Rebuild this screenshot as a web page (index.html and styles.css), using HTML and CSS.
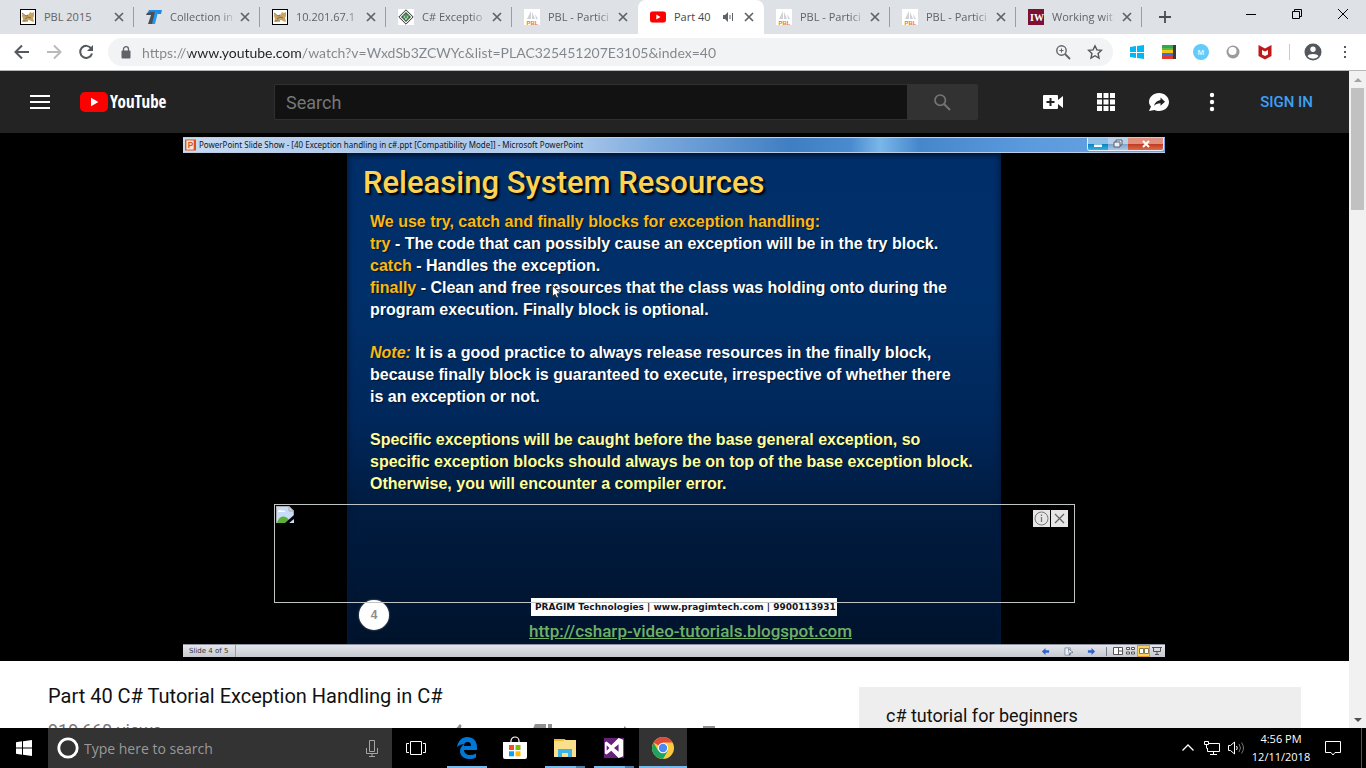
FILE: index.html
```html
<!DOCTYPE html>
<html lang="en">
<head>
<meta charset="utf-8">
<title>Part 40 C# Tutorial Exception Handling in C# - YouTube</title>
<link rel="stylesheet" href="styles.css">
</head>
<body>
<svg class="defs" aria-hidden="true">
  <defs>
    <symbol id="close" viewBox="0 0 10 10"><path d="M1 1l8 8M9 1l-8 8" stroke="#5f6368" stroke-width="1.7" fill="none"/></symbol>
    <symbol id="tomcat" viewBox="0 0 16 16"><rect x=".5" y=".5" width="15" height="15" fill="#fff" stroke="#000"/><path d="M2 5l4 2 3-2 1-2 2 1 2-1v4l-1 2 1 3-1 1-4-2-3 1-4 1 1-3-1-3z" fill="#c9a562"/><path d="M2 4l4 3 2-1M5 10l3-2 3 1M3 12h5" stroke="#7c6c4c" fill="none"/></symbol>
    <symbol id="pbl" viewBox="0 0 16 16"><path d="M0 0h16v16H0z" fill="#fff"/><path d="M3 10l4-8v8zM8 10V3l3 7zM11 5l3 5h-2z" fill="#cfd1d4"/><text x="2.500" y="15.500" class="pbl-mark">PBL</text></symbol>
    <symbol id="yt" viewBox="0 0 28 20"><rect width="28" height="20" rx="5" fill="#f00"/><path d="M11 5.700v8.600l7.400-4.300z" fill="#fff"/></symbol>
  </defs>
</svg>

<header class="tabstrip">
  <nav class="tabs" aria-label="Tabs">
    <div class="tab"><svg class="fav"><use href="#tomcat"/></svg><a href="#" class="tab-name">PBL 2015</a><button class="x" aria-label="Close tab"><svg><use href="#close"/></svg></button></div>
    <div class="tab"><svg class="fav" viewBox="0 0 16 16"><path d="M3 1h13l-1 4H1z" fill="#1e88e5"/><path d="M5 3h5L7 15H2l3-9H0l1-2z" fill="#4a4f55"/><path d="M9 3h3L9 15H6z" fill="#1e9bf0"/></svg><a href="#" class="tab-name fade">Collection in</a><button class="x" aria-label="Close tab"><svg><use href="#close"/></svg></button></div>
    <div class="tab"><svg class="fav"><use href="#tomcat"/></svg><a href="#" class="tab-name fade">10.201.67.1</a><button class="x" aria-label="Close tab"><svg><use href="#close"/></svg></button></div>
    <div class="tab"><svg class="fav" viewBox="0 0 16 16"><path d="M0 0h16v16H0z" fill="#fff"/><path d="M8 .8L15.200 8 8 15.200.8 8z" fill="#e8eee8" stroke="#333"/><path d="M8 3l5 5-5 5-5-5z" fill="#555"/><path d="M5 6l3-1 3 1v3l-3 2-3-2z" fill="#4d9a5c"/><path d="M6 8h1M9 8h1M7 10h2" stroke="#fff"/></svg><a href="#" class="tab-name fade">C# Exceptio</a><button class="x" aria-label="Close tab"><svg><use href="#close"/></svg></button></div>
    <div class="tab before-active"><svg class="fav"><use href="#pbl"/></svg><a href="#" class="tab-name fade">PBL - Partici</a><button class="x" aria-label="Close tab"><svg><use href="#close"/></svg></button></div>
    <div class="tab active"><svg class="fav fav-yt" viewBox="0 0 28 20"><use href="#yt"/></svg><a href="#" class="tab-name">Part 40</a><button class="mute" aria-label="Mute tab"><svg viewBox="0 0 12 10"><path d="M0 3h2l3-3v10L2 7H0z" fill="#5f6368"/><path d="M7 3v4M9.500 1v8" stroke="#5f6368"/></svg></button><button class="x" aria-label="Close tab"><svg><use href="#close"/></svg></button></div>
    <div class="tab"><svg class="fav"><use href="#pbl"/></svg><a href="#" class="tab-name fade">PBL - Partici</a><button class="x" aria-label="Close tab"><svg><use href="#close"/></svg></button></div>
    <div class="tab"><svg class="fav"><use href="#pbl"/></svg><a href="#" class="tab-name fade">PBL - Partici</a><button class="x" aria-label="Close tab"><svg><use href="#close"/></svg></button></div>
    <div class="tab"><svg class="fav" viewBox="0 0 16 16"><path d="M0 0h16v16H0z" fill="#7d1230"/><text x="2" y="12" class="iw-mark">IW</text></svg><a href="#" class="tab-name fade">Working wit</a><button class="x" aria-label="Close tab"><svg><use href="#close"/></svg></button></div>
  </nav>
  <button class="newtab" aria-label="New tab"><svg viewBox="0 0 12 12"><path d="M6 0v12M0 6h12" stroke="#4a4d51" stroke-width="1.800"/></svg></button>
  <div class="winbtns">
    <button aria-label="Minimize"><svg viewBox="0 0 10 10"><path d="M0 5.500h10" stroke="#000"/></svg></button>
    <button aria-label="Restore"><svg viewBox="0 0 10 10"><path d="M.5 2.500h7v7h-7zM2.500 2.500v-2h7v7h-2" fill="none" stroke="#000"/></svg></button>
    <button aria-label="Close"><svg viewBox="0 0 10 10"><path d="M0 0l10 10M10 0L0 10" stroke="#000"/></svg></button>
  </div>
</header>

<div class="toolbar">
  <button class="tool" aria-label="Back"><svg viewBox="0 0 16 16"><path d="M15 8H2M8 1.500L1.500 8 8 14.500" fill="none" stroke="#54575b" stroke-width="2"/></svg></button>
  <button class="tool" aria-label="Forward"><svg viewBox="0 0 16 16"><path d="M1 8h13M8 1.500L14.500 8 8 14.500" fill="none" stroke="#bababa" stroke-width="2"/></svg></button>
  <button class="tool" aria-label="Reload"><svg viewBox="0 0 16 16"><path d="M13.200 4.500A6 6 0 1 0 14 9.500" fill="none" stroke="#54575b" stroke-width="2"/><path d="M15 1v6H9z" fill="#54575b"/></svg></button>
  <div class="omnibox">
    <svg class="lock" viewBox="0 0 10 13"><path d="M2.500 5V3.200a2.500 2.500 0 0 1 5 0V5" fill="none" stroke="#5f6368" stroke-width="1.300"/><rect x=".5" y="4.500" width="9" height="8" rx="1" fill="#5f6368"/></svg>
    <input class="url" aria-label="Address" value="https://www.youtube.com/watch?v=WxdSb3ZCWYc&amp;list=PLAC325451207E3105&amp;index=40">
    <button class="tool" aria-label="Zoom"><svg viewBox="0 0 16 16"><circle cx="6.500" cy="6.500" r="4.700" fill="none" stroke="#5f6368" stroke-width="1.400"/><path d="M10 10l5 5" stroke="#5f6368" stroke-width="1.800"/><path d="M6.500 4.500v4M4.500 6.500h4" stroke="#5f6368"/></svg></button>
    <button class="tool" aria-label="Bookmark"><svg viewBox="0 0 16 16"><path d="M8 1.800l1.900 4.100 4.500.5-3.300 3.100.9 4.500-4-2.300L4 14l.9-4.500L1.600 6.400l4.500-.5z" fill="none" stroke="#54575b" stroke-width="1.400"/></svg></button>
  </div>
  <button class="tool" aria-label="Windows"><svg viewBox="0 0 16 16"><path d="M1 3l6-1v6H1zM8 2l7-1v7H8zM1 9h6v5l-6-1zM8 9h7v6l-7-1z" fill="#00b9f2"/></svg></button>
  <button class="tool" aria-label="Stack"><svg viewBox="0 0 16 16"><path d="M1 1h12v3H1z" fill="#2fa84f"/><path d="M1 4h12v3H1z" fill="#58b947"/><path d="M1 6h12v3H1z" fill="#f8c21c"/><path d="M1 9h12v2H1z" fill="#3b6fd8"/><path d="M1 11h12v4H1z" fill="#e0392b"/><path d="M12 1h3v14h-3z" fill="#3b3b3b"/></svg></button>
  <button class="tool" aria-label="Momentum"><svg viewBox="0 0 16 16"><circle cx="8" cy="8" r="8" fill="#63cbfa"/><text x="4.500" y="11" class="m-mark">M</text></svg></button>
  <button class="tool" aria-label="Extension"><svg viewBox="0 0 16 16"><circle cx="8" cy="8" r="6.500" fill="#9b9b9b"/><circle cx="7.500" cy="7" r="4" fill="#fff"/></svg></button>
  <button class="tool" aria-label="McAfee"><svg viewBox="0 0 16 16"><path d="M1.500 1L8 4.500 14.500 1v11L8 15.500 1.500 12zM5 6v4.500L8 12l3-1.500V6L8 7.500z" fill="#c01818" fill-rule="evenodd"/></svg></button>
  <span class="rule"></span>
  <button class="tool avatar" aria-label="Profile"><svg viewBox="0 0 18 18"><circle cx="9" cy="9" r="8.500" fill="#54575b"/><circle cx="9" cy="6.300" r="2.700" fill="#fff"/><path d="M3.500 13.200c1-3 10-3 11 0a7 7 0 0 1-11 0z" fill="#fff"/></svg></button>
  <button class="tool" aria-label="Menu"><svg viewBox="0 0 16 16"><path d="M7 2h2v2H7zM7 7h2v2H7zM7 12h2v2H7z" fill="#54575b"/></svg></button>
</div>

<div class="viewport">
  <div class="page">
    <header class="masthead">
      <div class="brand">
        <button class="guide" aria-label="Guide"><svg viewBox="0 0 20 14"><path d="M0 1h20M0 7h20M0 13h20" stroke="#fff" stroke-width="2"/></svg></button>
        <a href="#" class="logo"><svg viewBox="0 0 28 20"><use href="#yt"/></svg><span>YouTube</span></a>
      </div>
      <form class="search">
        <input type="text" placeholder="Search" aria-label="Search">
        <button type="button" aria-label="Search"><svg viewBox="0 0 17 17"><circle cx="6.200" cy="6.200" r="5.200" fill="none" stroke="#757575" stroke-width="1.700"/><path d="M10 10l6 6" stroke="#757575" stroke-width="2"/></svg></button>
      </form>
      <div class="actions">
        <button aria-label="Create"><svg viewBox="0 0 22 20"><path d="M2 3h13a1 1 0 0 1 1 1v4l5-4v12l-5-4v4a1 1 0 0 1-1 1H2a1 1 0 0 1-1-1V4a1 1 0 0 1 1-1z" fill="#fff"/><path d="M8.500 6v8M4.500 10h8" stroke="#222" stroke-width="2"/></svg></button>
        <button aria-label="Apps"><svg viewBox="0 0 22 20"><path d="M2 1h5v5H2zM8.500 1h5v5h-5zM15 1h5v5h-5zM2 7.500h5v5H2zM8.500 7.500h5v5h-5zM15 7.500h5v5h-5zM2 14h5v5H2zM8.500 14h5v5h-5zM15 14h5v5h-5z" fill="#fff"/></svg></button>
        <button aria-label="Messages"><svg viewBox="0 0 22 20"><path d="M11 1c5.600 0 10 4 10 9s-4.400 9-10 9c-1.700 0-3-.3-4.500-1L1 19l2-4.500C1.700 13 1 11.500 1 10c0-5 4.400-9 10-9z" fill="#fff"/><path d="M12.500 5.500L17 9.700l-4.500 4v-2.500c-3 0-5 .8-6.500 2.800.5-3.500 3-5.500 6.500-6z" fill="#222"/></svg></button>
        <button aria-label="Settings"><svg viewBox="0 0 22 20"><circle cx="11" cy="3" r="2.200" fill="#fff"/><circle cx="11" cy="10" r="2.200" fill="#fff"/><circle cx="11" cy="17" r="2.200" fill="#fff"/></svg></button>
        <a href="#" class="signin">SIGN IN</a>
      </div>
    </header>

    <section class="player">
      <div class="ppt">
        <div class="ppt-title">
          <svg class="ppt-icon" viewBox="0 0 12 12"><path d="M0 0h12v12H0z" fill="#d9531e"/><path d="M1.500 1h8v10h-8z" fill="#fbe3d4"/><text x="3" y="9.500" class="p-mark">P</text></svg>
          <span>PowerPoint Slide Show - [40 Exception handling in c#.ppt [Compatibility Mode]] - Microsoft PowerPoint</span>
          <div class="ppt-btns">
            <button class="min" aria-label="Minimize slide show"><svg viewBox="0 0 12 10"><path d="M2 5.500h8v2.500H2z" fill="#fff"/></svg></button>
            <button class="res" aria-label="Restore slide show"><svg viewBox="0 0 12 10"><path d="M2 3h6v5H2zM4 3V1h6v5H8" fill="#e8eef6" stroke="#56606e"/></svg></button>
            <button class="cls" aria-label="Close slide show"><svg viewBox="0 0 12 10"><path d="M3 2l6 6M9 2L3 8" stroke="#fff" stroke-width="2"/></svg></button>
          </div>
        </div>
        <article class="slide">
          <h1>Releasing System Resources</h1>
          <p><b>We use try, catch and finally blocks for exception handling:</b><br><b>try</b> - The code that can possibly cause an exception will be in the try block.<br><b>catch</b> - Handles the exception.<br><b>finally</b> - Clean and free resources that the class was holding onto during the<br>program execution. Finally block is optional.</p>
          <p><b><i>Note:</i></b> It is a good practice to always release resources in the finally block,<br>because finally block is guaranteed to execute, irrespective of whether there<br>is an exception or not.</p>
          <p class="pale">Specific exceptions will be caught before the base general exception, so<br>specific exception blocks should always be on top of the base exception block.<br>Otherwise, you will encounter a compiler error.</p>
          <footer class="slide-foot">
            <span class="num">4</span>
            <div class="credits">
              <span class="firm">PRAGIM Technologies | www.pragimtech.com | 9900113931</span>
              <a href="#">http://csharp-video-tutorials.blogspot.com</a>
            </div>
          </footer>
          <svg class="pointer" viewBox="0 0 9 14"><path d="M.5.5v11l2.500-2.300L4.800 13l1.700-.8L5 8.700h3.300z" fill="#fff" stroke="#222" stroke-width=".8"/></svg>
        </article>
        <div class="ppt-status">
          <span class="slide-no">Slide 4 of 5</span>
          <div class="ppt-nav">
            <button aria-label="Previous slide"><svg viewBox="0 0 10 10"><path d="M1 5l4-4v2.500h4v3H5V9z" fill="#2f62d0"/></svg></button>
            <button aria-label="Slide menu"><svg viewBox="0 0 10 10"><path d="M1 1h6v8H1z" fill="#e9eef7" stroke="#8793a8"/><path d="M5 2l5 4-3 .5L6 9z" fill="#fff" stroke="#4c5a70" stroke-width=".7"/></svg></button>
            <button aria-label="Next slide"><svg viewBox="0 0 10 10"><path d="M9 5L5 1v2.500H1v3h4V9z" fill="#2f62d0"/></svg></button>
          </div>
          <div class="ppt-views">
            <button aria-label="Normal"><svg viewBox="0 0 10 8"><path d="M.5.5h9v7h-9zM5.500 1v6M5.500 4h4" fill="#fff" stroke="#555"/></svg></button>
            <button aria-label="Sorter"><svg viewBox="0 0 10 8"><path d="M.5.5h3v2h-3zM5.500.5h3v2h-3zM.5 5h3v2h-3zM5.500 5h3v2h-3z" fill="#fff" stroke="#555"/></svg></button>
            <button class="on" aria-label="Reading"><svg viewBox="0 0 10 8"><path d="M.5 1.500h4v5h-4zM5.500 1.500h4v5h-4z" fill="#fff" stroke="#8b7a4a"/></svg></button>
            <button aria-label="Show"><svg viewBox="0 0 10 8"><path d="M0 .5h10M1.500 1v3.500h7V1M5 5v2M3 7.500h4" fill="none" stroke="#555"/></svg></button>
          </div>
        </div>
      </div>
      <aside class="ad">
        <svg class="broken" viewBox="0 0 18 17"><path d="M0 0h13l5 5v12H0z" fill="#c8dcf8"/><path d="M2 6c0-2 3-3 4-1 2-1 3 0 3 1z" fill="#fff"/><path d="M1 17c2-8 9-8 12-3l1 3z" fill="#5bb13a"/><path d="M9 17l9-8v4l-5 4z" fill="#000"/><path d="M.5 17V.5H13l4.500 4.500v4M13 .5V5h4.500" fill="none" stroke="#a9a9a9"/></svg>
        <div class="ad-btns">
          <button aria-label="Ad info"><svg viewBox="0 0 17 17"><circle cx="8.500" cy="8.500" r="6.500" fill="none" stroke="#777"/><path d="M8.500 7v5M8.500 4.500V6" stroke="#777" stroke-width="1.300"/></svg></button>
          <button aria-label="Close ad"><svg viewBox="0 0 17 17"><path d="M4 4l9 9M13 4l-9 9" stroke="#666" stroke-width="1.300"/></svg></button>
        </div>
      </aside>
    </section>

    <main class="below">
      <section class="primary">
        <h2>Part 40 C# Tutorial Exception Handling in C#</h2>
        <div class="meta">
          <span>919,660 views</span>
          <div class="meta-btns">
            <button aria-label="Like"><svg viewBox="0 0 22 22"><path d="M0 9h4v12H0zM6 9l7-8 1.500 1.500L13.500 8H21v5l-3 8H6z" fill="#909090"/></svg></button>
            <button aria-label="Dislike"><svg viewBox="0 0 22 22"><path d="M4 1h11v12l-6 7-2-1 1-6H1V8zM17 1h4v12h-4z" fill="#909090"/></svg></button>
            <button aria-label="Share"><svg viewBox="0 0 22 22"><path d="M9 3l10 8-10 8v-4c-4 0-7 2-8 5 0-6 3-10 8-11z" fill="#909090"/></svg></button>
            <button aria-label="Save"><svg viewBox="0 0 22 22"><path d="M4 3h12v2H4zM4 7h12v2H4zM4 12h8v2H4z" fill="#909090"/></svg></button>
          </div>
        </div>
      </section>
      <aside class="playlist"><h3>c# tutorial for beginners</h3></aside>
    </main>
  </div>
  <div class="scrollbar">
    <button aria-label="Scroll up"><svg viewBox="0 0 8 4"><path d="M4 0l4 4H0z" fill="#a3a3a3"/></svg></button>
    <span class="thumb"></span>
    <button class="down" aria-label="Scroll down"><svg viewBox="0 0 8 4"><path d="M4 4L0 0h8z" fill="#505050"/></svg></button>
  </div>
</div>

<footer class="taskbar">
  <button class="task start" aria-label="Start"><svg viewBox="0 0 16 16"><path d="M0 2.200l6-.9v6.200H0zM7 1.200l9-1.200v7.500H7zM0 8.500h6v6.200l-6-.9zM7 8.500h9V16l-9-1.200z" fill="#fff"/></svg></button>
  <div class="cortana">
    <svg class="ring" viewBox="0 0 22 22"><circle cx="11" cy="11" r="9.200" fill="none" stroke="#fff" stroke-width="2.800"/></svg>
    <input type="text" placeholder="Type here to search" aria-label="Type here to search">
    <button aria-label="Speak"><svg viewBox="0 0 12 17"><path d="M3.500.5h5v11h-5zM.5 8v5.500h11V8M6 13.500v3M3 16.500h6" fill="none" stroke="#a5a5a5"/></svg></button>
  </div>
  <div class="tasks">
    <button class="task view" aria-label="Task view"><svg viewBox="0 0 20 14"><path d="M4.500.5h11v13h-11zM3 2.500H.5v9H3M17 2.500h2.500v9H17" fill="none" stroke="#fff"/></svg></button>
    <button class="task run" aria-label="Edge"><svg viewBox="0 0 22 22"><path d="M1 10C2 4 6 0 11 0c6 0 10 4 10 10v3H8c0 3 3 5 6 5 2 0 4-.5 6-1.500v4C18 21.500 16 22 13 22 7 22 4 18 4 14c0-3 2-6 5-7-3 0-6 1-8 3zm7-1h7c0-3-1-4-3.500-4S8 6.500 8 9z" fill="#0078d7"/></svg></button>
    <button class="task store" aria-label="Store"><svg viewBox="0 0 24 24"><path d="M8 7V5a4 4 0 0 1 8 0v2" fill="none" stroke="#fff" stroke-width="1.200"/><path d="M0 6h24v15q0 2-2 2H2q-2 0-2-2z" fill="#fff"/><path d="M6 9h5v5H6z" fill="#f25022"/><path d="M12.500 9h5v5h-5z" fill="#7fba00"/><path d="M6 15.300h5v5H6z" fill="#00a4ef"/><path d="M12.500 15.300h5v5h-5z" fill="#ffb900"/></svg></button>
    <button class="task run many" aria-label="File Explorer"><svg viewBox="0 0 22 20"><path d="M0 1h10l2 1h10v17H0z" fill="#fbe08c"/><path d="M0 1h10v2H0z" fill="#f2bd2c"/><path d="M4 19v-8h14v8h-4v-4H8v4z" fill="#3db4e8"/></svg></button>
    <button class="task run many" aria-label="Visual Studio"><svg viewBox="0 0 24 24"><path d="M1 1h22v22H1z" fill="#68217a"/><path d="M17 1l5 2v18l-5 2-8-8-5 4-2-1V6l2-1 5 4zM4 9v6l3-3zM17 8l-5 4 5 4z" fill="#fff" fill-rule="evenodd"/></svg></button>
    <button class="task run current" aria-label="Chrome"><svg viewBox="0 0 22 22"><circle cx="11" cy="11" r="11" fill="#fcc93c"/><path d="M11 11L1.500 5.500A11 11 0 0 1 20.500 5.500H11z" fill="#dd4b3e"/><path d="M1.500 5.500A11 11 0 0 0 11 22l5-8.500-5-2.500-4.800 2.700z" fill="#1da362"/><circle cx="11" cy="11" r="5.200" fill="#fff"/><circle cx="11" cy="11" r="4.200" fill="#4a8af4"/></svg></button>
  </div>
  <div class="tray">
    <button aria-label="Hidden icons"><svg viewBox="0 0 16 16"><path d="M2.500 10.500L8 5l5.500 5.500" fill="none" stroke="#fff" stroke-width="1.300"/></svg></button>
    <button aria-label="Network"><svg viewBox="0 0 16 16"><path d="M4 3.500h11.500v8H3.500V8M9.500 12v2.500M6 14.500h7M.5 1.500h4v3h-4zM2.500 5v3.500" fill="none" stroke="#fff"/></svg></button>
    <button aria-label="Volume"><svg viewBox="0 0 16 16"><path d="M.5 5.500h2l4-3.500v12l-4-3.500h-2z" fill="none" stroke="#fff"/><path d="M8.500 6q1.500 2 0 4" fill="none" stroke="#fff"/><path d="M11 4q3 4 0 8M13.500 2.500q4 5.500 0 11" fill="none" stroke="#777"/></svg></button>
    <div class="clock"><time>4:56 PM</time><time>12/11/2018</time></div>
    <button aria-label="Notifications"><svg viewBox="0 0 16 16"><path d="M.5 1.500h15v11H10l-2 2.500-2-2.500H.5z" fill="none" stroke="#fff"/></svg></button>
    <span class="peek"></span>
  </div>
</footer>
</body>
</html>
```

FILE: styles.css
```css
* { box-sizing: border-box; }
body { margin: 0; height: 100vh; display: flex; flex-direction: column; overflow: hidden; background: #fff; font-family: "Open Sans", "Noto Sans", sans-serif; }
button { border: 0; padding: 0; margin: 0; background: none; font: inherit; display: flex; align-items: center; justify-content: center; flex: none; }
input { border: 0; padding: 0; margin: 0; background: none; min-width: 0; outline: 0; }
a { text-decoration: none; }
svg { display: block; flex: none; }
h1, h2, h3, p { margin: 0; font-weight: 400; }
.defs { position: absolute; width: 0; height: 0; }

/* Tab strip */
.tabstrip { display: flex; align-items: stretch; height: 34px; padding-left: 8px; background: #dee1e6; flex: none; }
.tabs { display: flex; flex: 0 1 1134px; min-width: 0; }
.tab { position: relative; display: flex; align-items: center; flex: 1 1 0; min-width: 0; padding: 0 10px 0 12px; color: #5f6368; }
.tab::after { content: ""; position: absolute; right: 0; top: 7px; width: 1px; height: 20px; background: #9a9da1; }
.tab.active::after, .tab.before-active::after { display: none; }
.tab.active { background: #fff; border-radius: 8px 8px 0 0; }
.fav { width: 16px; height: 16px; margin-right: 8px; }
.fav-yt { height: 12px; }
.tab-name { flex: 1; min-width: 0; overflow: hidden; white-space: nowrap; font-size: 11px; line-height: 20px; color: inherit; }
.fade { -webkit-mask-image: linear-gradient(to left, transparent, #000 16px); mask-image: linear-gradient(to left, transparent, #000 16px); }
.active .tab-name { color: #45494d; }
.x { width: 10px; height: 10px; margin-left: 4px; }
.x svg { width: 10px; height: 10px; }
.mute { width: 12px; margin: 0 5px 0 6px; }
.mute svg { width: 12px; height: 10px; }
.newtab { width: 46px; }
.newtab svg { width: 12px; height: 12px; }
.winbtns { display: flex; margin-left: auto; padding-bottom: 6px; }
.winbtns button { width: 46px; }
.winbtns svg { width: 10px; height: 10px; }
.pbl-mark { font: 700 6px "Liberation Sans", sans-serif; fill: #f07a28; }
.iw-mark { font: 700 10px "Liberation Serif", serif; fill: #fff; }
.m-mark { font: 700 8px "Liberation Sans", sans-serif; fill: #d9f4ff; }
.p-mark { font: 700 9px "Liberation Sans", sans-serif; fill: #d9531e; }

/* Toolbar */
.toolbar { display: flex; align-items: center; height: 37px; padding: 0 5px 0 6px; border-bottom: 1px solid #b4b7b9; background: #fff; flex: none; }
.tool { width: 32px; height: 28px; }
.tool svg { width: 16px; height: 16px; }
.tool.avatar svg { width: 18px; height: 18px; }
.omnibox { display: flex; align-items: center; flex: 1; min-width: 0; height: 28px; margin: 0 8px 0 6px; padding: 0 2px 0 13px; border-radius: 14px; background: #f1f3f4; }
.lock { width: 10px; height: 13px; margin-right: 11px; }
.url { flex: 1; height: 28px; font: 14px Lato, "Open Sans", sans-serif; color: transparent; background: linear-gradient(to right, #80868b 47px, #202124 47px, #202124 160px, #80868b 160px); -webkit-background-clip: text; background-clip: text; }
.rule { width: 1px; height: 16px; margin: 0 7px 0 8px; background: #c8cacd; }

/* Page */
.viewport { display: flex; flex: 1; min-height: 0; }
.page { flex: 1; min-width: 0; overflow: hidden; font-family: Roboto, sans-serif; }
.scrollbar { display: flex; flex-direction: column; align-items: center; width: 17px; background: #f1f1f1; flex: none; }
.scrollbar button { width: 17px; height: 17px; }
.scrollbar svg { width: 8px; height: 4px; }
.thumb { width: 13px; height: 122px; background: #c1c1c1; }
.down { margin-top: auto; }

.masthead { display: grid; grid-template-columns: 274px minmax(0, 704px) 1fr; align-items: center; height: 62px; background: #232323; }
.brand { display: flex; align-items: center; padding-left: 30px; gap: 30px; }
.guide svg { width: 20px; height: 14px; }
.logo { display: flex; align-items: center; gap: 2px; color: #fff; font: 700 17px/20px "Open Sans Condensed", "Roboto Condensed", Roboto, sans-serif; }
.logo svg { width: 28px; height: 20px; }
.search { display: flex; height: 36px; margin: 0; }
.search input { flex: 1; padding: 0 11px; background: #121212; border: 1px solid #303030; border-right: 0; border-radius: 2px 0 0 2px; color: #fff; font: 18px Roboto, sans-serif; }
.search input::placeholder { color: #777; opacity: 1; }
.search button { width: 71px; background: #323232; border-radius: 0 2px 2px 0; }
.search button svg { width: 17px; height: 17px; }
.actions { display: flex; align-items: center; justify-content: flex-end; gap: 31px; padding-right: 36px; }
.actions svg { width: 22px; height: 20px; }
.signin { margin-left: 6px; color: #3ea0f5; font: 500 15px/20px Roboto, sans-serif; white-space: nowrap; }

/* Slide show window */
.player { position: relative; display: flex; justify-content: center; padding: 4px 1px 4px 0; background: #000; }
.ppt { display: flex; flex-direction: column; width: 100%; max-width: 982px; }
.ppt-title { display: flex; align-items: flex-start; height: 16px; padding: 0 1px 0 2px; border: 1px solid #b9cfe8; border-width: 1px 0; background: linear-gradient(90deg, #c9dbf0, #a9c6ea 20%, #b5cfee 38%, #7ba9dd 48%, #3f7ec2 62%, #4a8bd0 68%, #79b7ea 71%, #4686cb 75%, #5c9ade 86%, #69a3e0); font: 8px/14px "Noto Sans", sans-serif; color: #10161e; white-space: nowrap; }
.ppt-icon { width: 11px; height: 12px; margin: 1px 3px 0 0; }
.ppt-btns { display: flex; margin-left: auto; border: 1px solid #e5eefa; border-top: 0; border-radius: 0 0 3px 3px; overflow: hidden; }
.ppt-btns button { height: 12px; }
.ppt-btns svg { width: 12px; height: 10px; }
.ppt-btns .min { width: 20px; background: linear-gradient(#8fc0e8 50%, #0f7fbf 50%, #2bb6e6); }
.ppt-btns .res { width: 20px; background: linear-gradient(#b9d0ea 50%, #7fa4cc 50%, #a9c8e6); }
.ppt-btns .cls { width: 35px; background: linear-gradient(#e0907c 50%, #c03a20 50%, #dd6a4c); }
.slide { position: relative; display: flex; flex-direction: column; width: 100%; max-width: 654px; min-height: 491px; margin: 0 auto; padding: 12px 16px; background: linear-gradient(#002e69, #003069 30%, #00275a 55%, #001c41 72%, #00132c); box-shadow: inset 0 4px 5px -2px #001530, inset 3px 0 6px -2px #001c40, inset -3px 0 6px -2px #001c40; color: #fff; }
.slide h1 { margin-bottom: 10px; font: 500 31px/36px Roboto, sans-serif; color: #fdd353; text-shadow: 2px 2px 2px #000; }
.slide p { margin: 0 0 21px 7px; font: 700 16px/22px "Liberation Sans", sans-serif; white-space: nowrap; text-shadow: 1px 1px 1px #001530; }
.slide b { color: #fbb813; }
.slide .pale { color: #ffff99; }
.slide-foot { display: flex; align-items: flex-start; gap: 140px; margin: auto 0 -10px -4px; }
.num { display: flex; align-items: center; justify-content: center; width: 30px; height: 30px; margin-top: 2px; border-radius: 50%; background: #fff; color: #8c8c8c; font: 700 12px "Liberation Sans", sans-serif; box-shadow: 0 0 2px #889; }
.credits { display: flex; flex-direction: column; align-items: flex-start; gap: 4px; }
.firm { margin-left: 2px; padding: 0 1px 0 4px; background: #fff; color: #15151f; font: 700 9px/18px "DejaVu Sans", sans-serif; white-space: nowrap; }
.credits a { color: #6fb065; font: 500 17px/22px Roboto, sans-serif; text-decoration: underline; white-space: nowrap; }
.pointer { position: absolute; left: 205px; top: 132px; width: 9px; height: 14px; }
.ppt-status { display: flex; align-items: center; height: 13px; padding: 0 2px 0 6px; background: linear-gradient(#e4e6ec, #c6c9d1); border-top: 1px solid #8d93a0; color: #333; font: 7px/12px "DejaVu Sans", sans-serif; }
.slide-no { padding-right: 7px; border-right: 1px solid #9a9da5; }
.ppt-nav { display: flex; gap: 14px; margin-left: auto; padding-right: 10px; border-right: 1px solid #777c88; }
.ppt-nav svg { width: 9px; height: 9px; }
.ppt-views { display: flex; padding-left: 4px; }
.ppt-views button { width: 13px; height: 12px; }
.ppt-views svg { width: 10px; height: 8px; }
.ppt-views .on { background: #fbd264; border: 1px solid #d99a26; }

/* Banner over the video */
.ad { position: absolute; left: 0; right: 1px; bottom: 58px; width: 801px; max-width: 100%; height: 99px; margin: 0 auto; display: flex; justify-content: space-between; align-items: flex-start; padding: 1px 6px 0 1px; border: 1px solid #bfc4c4; }
.broken { width: 18px; height: 17px; }
.ad-btns { display: flex; gap: 1px; margin-top: 4px; }
.ad-btns button { width: 17px; height: 17px; background: #e6e6e6; }
.ad-btns svg { width: 17px; height: 17px; }

.below { display: grid; grid-template-columns: minmax(0, 1fr) 442px; gap: 85px; padding: 26px 48px 0; background: #fff; }
.primary h2 { margin-bottom: 14px; font-size: 20px; line-height: 18px; color: #111; }
.meta { display: flex; justify-content: space-between; font-size: 18px; line-height: 24px; color: #777; }
.meta-btns { display: flex; align-items: flex-start; gap: 62px; margin-right: 53px; padding-top: 4px; }
.meta-btns svg { width: 22px; height: 22px; }
.playlist { padding: 18px 27px; background: #eee; }
.playlist h3 { font-size: 18px; line-height: 22px; color: #111; }

/* Taskbar */
.taskbar { display: flex; align-items: stretch; height: 40px; background: #000; color: #fff; flex: none; }
.task { position: relative; width: 48px; }
.task svg { width: 22px; height: 22px; }
.task.start svg { width: 16px; height: 16px; }
.task.view svg { width: 20px; height: 14px; }
.cortana { display: flex; align-items: center; flex: 0 1 344px; min-width: 0; padding: 0 14px 0 9px; background: #333; }
.ring { width: 22px; height: 22px; margin-right: 5px; }
.cortana input { flex: 1; font: 14px "Open Sans", sans-serif; color: #fff; }
.cortana input::placeholder { color: #999; opacity: 1; }
.cortana button svg { width: 12px; height: 17px; }
.tasks { display: flex; gap: 1px; }
.task.run { padding-left: 4px; }
.task.store { padding-left: 2px; }
.task.store svg { width: 24px; height: 24px; }
.run::after { content: ""; position: absolute; left: 6px; right: 2px; bottom: 0; height: 2px; background: #76b9ed; }
.many::after { background: linear-gradient(90deg, #76b9ed 31px, #4d7ea6 31px); }
.task.current { margin-left: 2px; padding-left: 0; background: #333; }
.current::after { left: 0; right: 0; }
.tray { display: flex; align-items: center; margin-left: auto; gap: 8px; }
.tray svg { width: 16px; height: 16px; }
.clock { display: flex; flex-direction: column; align-items: center; width: 58px; margin-right: 3px; font-size: 11px; line-height: 18px; }
.tray button:nth-of-type(4) { margin-left: 4px; }
.peek { align-self: stretch; width: 5px; margin-left: 12px; border-left: 1px solid #555; }
```
